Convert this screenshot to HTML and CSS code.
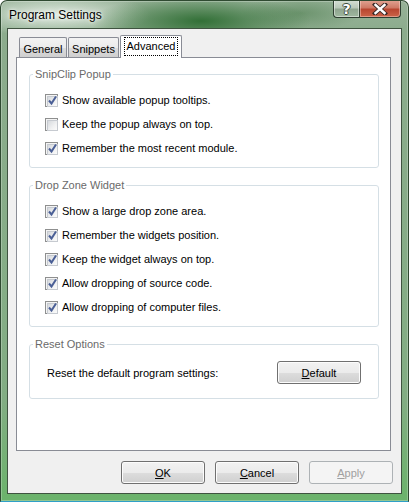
FILE: index.html
```html
<!DOCTYPE html>
<html>
<head>
<meta charset="utf-8">
<link rel="stylesheet" href="styles.css">
</head>
<body>
<div class="window">
  <div class="titlebar">
    <span class="title">Program Settings</span>
    <div class="caption-buttons">
      <span class="cap help">?</span>
      <span class="cap close">
        <svg width="16" height="12" viewBox="0 0 16 12"><path d="M3 1.5 L13 10.5 M13 1.5 L3 10.5" stroke="#3a2a28" stroke-width="4.2" stroke-linecap="square"/><path d="M3.5 2 L12.5 10 M12.5 2 L3.5 10" stroke="#fff" stroke-width="2.4" stroke-linecap="square"/></svg>
      </span>
    </div>
  </div>
  <div class="client">
    <div class="tabs">
      <div class="tab tab-general">General</div>
      <div class="tab tab-snippets">Snippets</div>
      <div class="tab tab-active"><span class="focus">Advanced</span></div>
    </div>
    <div class="panel">
      <fieldset class="group">
        <legend>SnipClip Popup</legend>
        <div class="rows">
          <label class="row"><span class="cb checked"></span>Show available popup tooltips.</label>
          <label class="row"><span class="cb"></span>Keep the popup always on top.</label>
          <label class="row"><span class="cb checked"></span>Remember the most recent module.</label>
        </div>
      </fieldset>
      <fieldset class="group">
        <legend>Drop Zone Widget</legend>
        <div class="rows">
          <label class="row"><span class="cb checked"></span>Show a large drop zone area.</label>
          <label class="row"><span class="cb checked"></span>Remember the widgets position.</label>
          <label class="row"><span class="cb checked"></span>Keep the widget always on top.</label>
          <label class="row"><span class="cb checked"></span>Allow dropping of source code.</label>
          <label class="row"><span class="cb checked"></span>Allow dropping of computer files.</label>
        </div>
      </fieldset>
      <fieldset class="group">
        <legend>Reset Options</legend>
        <div class="reset-row">
          <span>Reset the default program settings:</span>
          <button class="btn"><u>D</u>efault</button>
        </div>
      </fieldset>
    </div>
    <div class="buttons">
      <button class="btn"><u>O</u>K</button>
      <button class="btn"><u>C</u>ancel</button>
      <button class="btn disabled"><u>A</u>pply</button>
    </div>
  </div>
</div>
</body>
</html>
```

FILE: styles.css
```css
* { box-sizing: border-box; }
html, body { margin: 0; padding: 0; }
body {
  width: 409px;
  height: 502px;
  font-family: "Liberation Sans", Arial, sans-serif;
  font-size: 11px;
  color: #000;
  background: #fff;
}
.window {
  width: 409px;
  height: 502px;
  border: 1px solid #2f4a31;
  border-bottom-color: #2fa0c8;
  border-radius: 7px 7px 0 0;
  display: flex;
  flex-direction: column;
  background:
    radial-gradient(ellipse 110px 26px at 200px 20px, rgba(40,105,45,0.9), rgba(40,105,45,0) 100%),
    radial-gradient(ellipse 60px 18px at 300px 12px, rgba(70,120,72,0.5), rgba(70,120,72,0) 100%),
    radial-gradient(ellipse 95px 22px at 55px 14px, rgba(232,240,232,0.9), rgba(232,240,232,0) 100%),
    linear-gradient(to bottom, #97b298 0px, #8cac8d 30px, #82ad83 400px, #6cb36c 496px);
  box-shadow: inset 0 0 0 1px rgba(255,255,255,0.25);
  overflow: hidden;
}
.titlebar {
  height: 27px;
  display: flex;
  align-items: flex-start;
  justify-content: space-between;
  padding-left: 8px;
  padding-right: 7px;
}
.title {
  font-size: 12px;
  line-height: 12px;
  margin-top: 8px;
  color: #000;
  text-shadow: 0 0 6px rgba(255,255,255,0.9), 0 0 3px rgba(255,255,255,0.9);
}
.caption-buttons {
  display: flex;
  margin-top: -1px;
}
.cap {
  height: 18px;
  display: flex;
  align-items: center;
  justify-content: center;
  border: 1px solid #2e3e30;
  border-top: none;
}
.help {
  width: 26px;
  border-right: none;
  border-radius: 0 0 0 4px;
  background: linear-gradient(to bottom, #d6e0d6 0%, #b9c9b9 45%, #8fa58f 55%, #9fb89f 100%);
  box-shadow: inset 0 0 0 1px rgba(255,255,255,0.45);
  color: #fff;
  font: bold 14px "DejaVu Sans", sans-serif;
  text-shadow: 1px 0 0 #3a4a3a, -1px 0 0 #3a4a3a, 0 1px 0 #3a4a3a, 0 -1px 0 #3a4a3a;
}
.close {
  width: 42px;
  border-radius: 0 0 4px 0;
  background: linear-gradient(to bottom, #e2a494 0%, #cf7a66 45%, #b94630 55%, #cb6448 100%);
  box-shadow: inset 0 0 0 1px rgba(255,220,210,0.45);
}
.client {
  margin: 0 6px;
  height: 466px;
  background: #f0f0f0;
  border: 1px solid #3f5340;
  display: flex;
  flex-direction: column;
  padding: 6px 8px 0 8px;
}
.tabs {
  display: flex;
  align-items: flex-end;
  padding-left: 3px;
  height: 22px;
}
.tab {
  height: 20px;
  border: 1px solid #898c95;
  border-bottom: none;
  border-radius: 2px 2px 0 0;
  background: linear-gradient(to bottom, #f3f3f3 0%, #ebebeb 50%, #dddddd 51%, #cfcfcf 100%);
  display: flex;
  align-items: center;
  justify-content: center;
  padding-top: 2px;
  margin-right: 1px;
}
.tab-general { width: 48px; }
.tab-snippets { width: 51px; margin-right: 1px; }
.tab-active {
  width: 62px;
  height: 23px;
  margin-bottom: -1px;
  background: #fff;
  position: relative;
  z-index: 1;
  padding-top: 0;
  padding-bottom: 1px;
}
.focus {
  border: 1px dotted #000;
  padding: 2px 2px 3px 2px;
  line-height: 12px;
}
.panel {
  width: 375px;
  height: 394px;
  background: #fff;
  border: 1px solid #898c95;
  padding: 10px 11px 0 12px;
  display: flex;
  flex-direction: column;
}
.group {
  margin: 0 0 11px 0;
  padding: 0;
  border: 1px solid #d5dfe5;
  border-radius: 3px;
  min-width: 0;
}
.group legend {
  margin-left: 3px;
  padding: 0 2px;
  line-height: 13px;
  height: 13px;
  color: #6a6a6a;
}
.rows {
  padding: 7px 0 7px 15px;
}
.row {
  display: flex;
  align-items: center;
  height: 24px;
  gap: 4px;
}
.cb {
  width: 13px;
  height: 13px;
  border: 1px solid #8e8f8f;
  background: #f4f4f4;
  padding: 1px;
  flex: none;
  position: relative;
}
.cb::before {
  content: "";
  display: block;
  width: 9px;
  height: 9px;
  border: 1px solid #c6cad0;
  background: linear-gradient(135deg, #d6d9dd 0%, #f0f1f2 60%, #fbfbfb 100%);
}
.cb.checked::after {
  content: "";
  position: absolute;
  left: 1px;
  top: 0px;
  width: 11px;
  height: 11px;
  background: url("data:image/svg+xml;utf8,<svg xmlns='http://www.w3.org/2000/svg' width='11' height='11' viewBox='0 0 11 11'><path d='M2 5.5 L4.5 8.5 L9 1.5' fill='none' stroke='%234a5f96' stroke-width='2'/></svg>") no-repeat;
}
.reset-row {
  display: flex;
  align-items: center;
  justify-content: space-between;
  padding: 10px 17px 14px 17px;
}
.btn {
  width: 84px;
  height: 23px;
  border: 1px solid #707070;
  border-radius: 3px;
  background: linear-gradient(to bottom, #f2f2f2 0%, #ebebeb 50%, #dddddd 51%, #cfcfcf 100%);
  box-shadow: inset 0 0 0 1px #fcfcfc;
  font-family: "Liberation Sans", Arial, sans-serif;
  font-size: 11px;
  color: #000;
  padding: 0;
}
.btn u { text-underline-offset: 1px; }
.buttons {
  display: flex;
  justify-content: flex-end;
  gap: 10px;
  margin-top: 10px;
  padding-right: 0;
}
.btn.disabled {
  border-color: #adb2b5;
  background: #f4f4f4;
  box-shadow: none;
  color: #a0a0a0;
}
```
